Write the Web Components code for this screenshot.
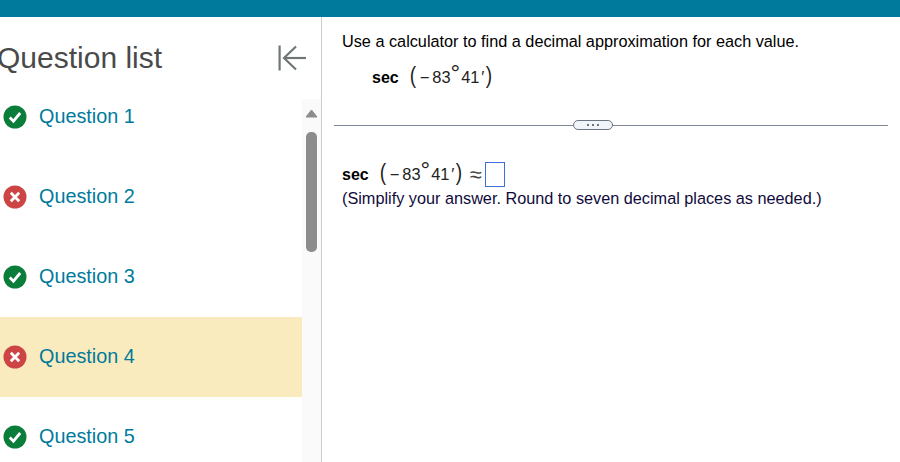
<!DOCTYPE html>
<html>
<head>
<meta charset="utf-8">
<title>Question list</title>
<style>
  html, body { margin: 0; height: 100%; overflow: hidden; background: #fff; }
  body { font-family: "Liberation Sans", Arial, sans-serif; }
</style>
</head>
<body>
<quiz-page>
  <question-list slot="side">
    <question-row status="ok">Question 1</question-row>
    <question-row status="bad">Question 2</question-row>
    <question-row status="ok">Question 3</question-row>
    <question-row status="bad" current>Question 4</question-row>
    <question-row status="ok">Question 5</question-row>
  </question-list>
  <question-pane slot="main"></question-pane>
</quiz-page>

<script>
class QuizPage extends HTMLElement {
  constructor() {
    super();
    this.attachShadow({ mode: "open" }).innerHTML = `
      <style>
        :host { display: flex; flex-direction: column; height: 462px; overflow: hidden; }
        .bar { height: 17px; flex: none; background: #007a9c; }
        .body { flex: 1; display: flex; min-height: 0; }
        .side { flex: none; width: 321px; border-right: 1px solid #ccc; overflow: hidden; }
        .main { flex: 1; min-width: 0; }
      </style>
      <div class="bar"></div>
      <div class="body">
        <div class="side"><slot name="side"></slot></div>
        <div class="main"><slot name="main"></slot></div>
      </div>`;
  }
}

class QuestionList extends HTMLElement {
  constructor() {
    super();
    this.attachShadow({ mode: "open" }).innerHTML = `
      <style>
        :host { display: block; height: 100%; }
        .head { height: 60px; box-sizing: border-box; padding: 21px 14px 0 0; display: flex; align-items: center; justify-content: space-between; }
        h2 { margin: 0 0 0 -3px; font: 400 30px/40px "Liberation Sans", Arial, sans-serif; color: #4a4a4a; }
        .back { display: block; }
        .wrap { display: flex; height: 385px; }
        .rows { width: 302px; flex: none; }
        .track { width: 19px; flex: none; margin-top: 22px; background: #fafafa; display: flex; flex-direction: column; align-items: center; }
        .up { display: block; margin-top: 10px; }
        .thumb { width: 11px; height: 120px; margin-top: 14px; background: #8c8c8c; border-radius: 5px; }
      </style>
      <div class="head">
        <h2>Question list</h2>
        <svg class="back" width="30" height="30" viewBox="0 0 30 30" fill="none" stroke="#6f7776" stroke-width="2.2">
          <path d="M2.6 2.5V27.5"/>
          <path d="M29 15H7"/>
          <path d="M19 3.5 7 15 19 26.5"/>
        </svg>
      </div>
      <div class="wrap">
        <div class="rows"><slot></slot></div>
        <div class="track">
          <svg class="up" width="13" height="9" viewBox="0 0 13 9"><path d="M6.5 1 12 8H1Z" fill="#8c8c8c" stroke="#8c8c8c" stroke-width="1" stroke-linejoin="round"/></svg>
          <div class="thumb"></div>
        </div>
      </div>`;
  }
}

class QuestionRow extends HTMLElement {
  constructor() {
    super();
    const bad = this.getAttribute("status") === "bad";
    const mark = bad
      ? `<circle cx="12" cy="12" r="11.5" fill="#cc4444"/><path d="M7.8 7.8 16.2 16.2M16.2 7.8 7.8 16.2" stroke="#fff" stroke-width="2.8" fill="none"/>`
      : `<circle cx="12" cy="12" r="11.5" fill="#0a7d3a"/><path d="M6.8 12.6 10.4 16.2 17.2 8" stroke="#fff" stroke-width="2.8" fill="none"/>`;
    this.attachShadow({ mode: "open" }).innerHTML = `
      <style>
        :host { display: flex; align-items: center; gap: 12px; height: 80px; padding-left: 3px; box-sizing: border-box;
                font: 400 19.8px/24px "Liberation Sans", Arial, sans-serif; color: #007a9c; }
        :host([current]) { background: #f9ebbd; }
        svg { flex: none; display: block; }
        span { position: relative; top: -1px; }
      </style>
      <svg width="24" height="24" viewBox="0 0 24 24">${mark}</svg>
      <span><slot></slot></span>`;
  }
}

class MathSec extends HTMLElement {
  constructor() {
    super();
    this.attachShadow({ mode: "open" }).innerHTML = `
      <style>
        :host { display: inline-flex; align-items: baseline; font: 400 16.4px/26px "Liberation Sans", Arial, sans-serif; color: #222; white-space: nowrap; }
        b { color: #000; font-size: 16px; margin-right: 10px; }
        .paren { font-size: 24px; line-height: 26px; transform: scaleX(.8); }
        .open { margin-right: 2px; }
        .minus { margin: 0 3px 0 1px; }
        sup { font-size: 24px; line-height: 0; position: relative; top: -2px; vertical-align: baseline; margin-right: 1px; }
        .prime { margin: 0 1px 0 2px; }
      </style>
      <b>sec</b><span class="paren open">(</span><span class="minus">&minus;</span><span>83</span><sup>&deg;</sup><span>41</span><span class="prime">&prime;</span><span class="paren">)</span>`;
  }
}

class PaneDivider extends HTMLElement {
  constructor() {
    super();
    this.attachShadow({ mode: "open" }).innerHTML = `
      <style>
        :host { display: flex; align-items: center; height: 10px; }
        .line { height: 1px; background: #7f8895; }
        .a { width: 239px; } .b { flex: 1; }
        .grip { width: 40px; height: 10px; box-sizing: border-box; border: 1px solid #6b7583; border-radius: 5px; background: #f1f4f8;
                display: flex; align-items: center; justify-content: center; gap: 3px; }
        i { width: 2px; height: 2px; background: #6b7583; }
      </style>
      <div class="line a"></div>
      <div class="grip"><i></i><i></i><i></i></div>
      <div class="line b"></div>`;
  }
}

class QuestionPane extends HTMLElement {
  constructor() {
    super();
    this.attachShadow({ mode: "open" }).innerHTML = `
      <style>
        :host { display: block; font: 400 16.25px/20px "Liberation Sans", Arial, sans-serif; color: #000; padding: 14px 12px 0 12px; }
        p { margin: 0; }
        .lead { margin-left: 8px; }
        .given { margin: 11px 0 0 38px; display: block; }
        pane-divider { margin-top: 29px; }
        .answer { display: flex; align-items: center; margin: 30px 0 0 8px; height: 26px; }
        .approx { font-size: 22px; margin: 0 3px 0 6px; color: #444; position: relative; top: 2px; }
        .box { width: 20px; height: 25px; margin-top: 2px; box-sizing: border-box; border: 1px solid #3c6fd8; background: #fff; }
        .note { margin: 2px 0 0 8px; color: #100b3c; }
      </style>
      <p class="lead">Use a calculator to find a decimal approximation for each value.</p>
      <div class="given"><math-sec></math-sec></div>
      <pane-divider></pane-divider>
      <div class="answer"><math-sec></math-sec><span class="approx">&asymp;</span><span class="box"></span></div>
      <p class="note">(Simplify your answer. Round to seven decimal places as needed.)</p>`;
  }
}

customElements.define("quiz-page", QuizPage);
customElements.define("question-list", QuestionList);
customElements.define("question-row", QuestionRow);
customElements.define("math-sec", MathSec);
customElements.define("pane-divider", PaneDivider);
customElements.define("question-pane", QuestionPane);
</script>
</body>
</html>
